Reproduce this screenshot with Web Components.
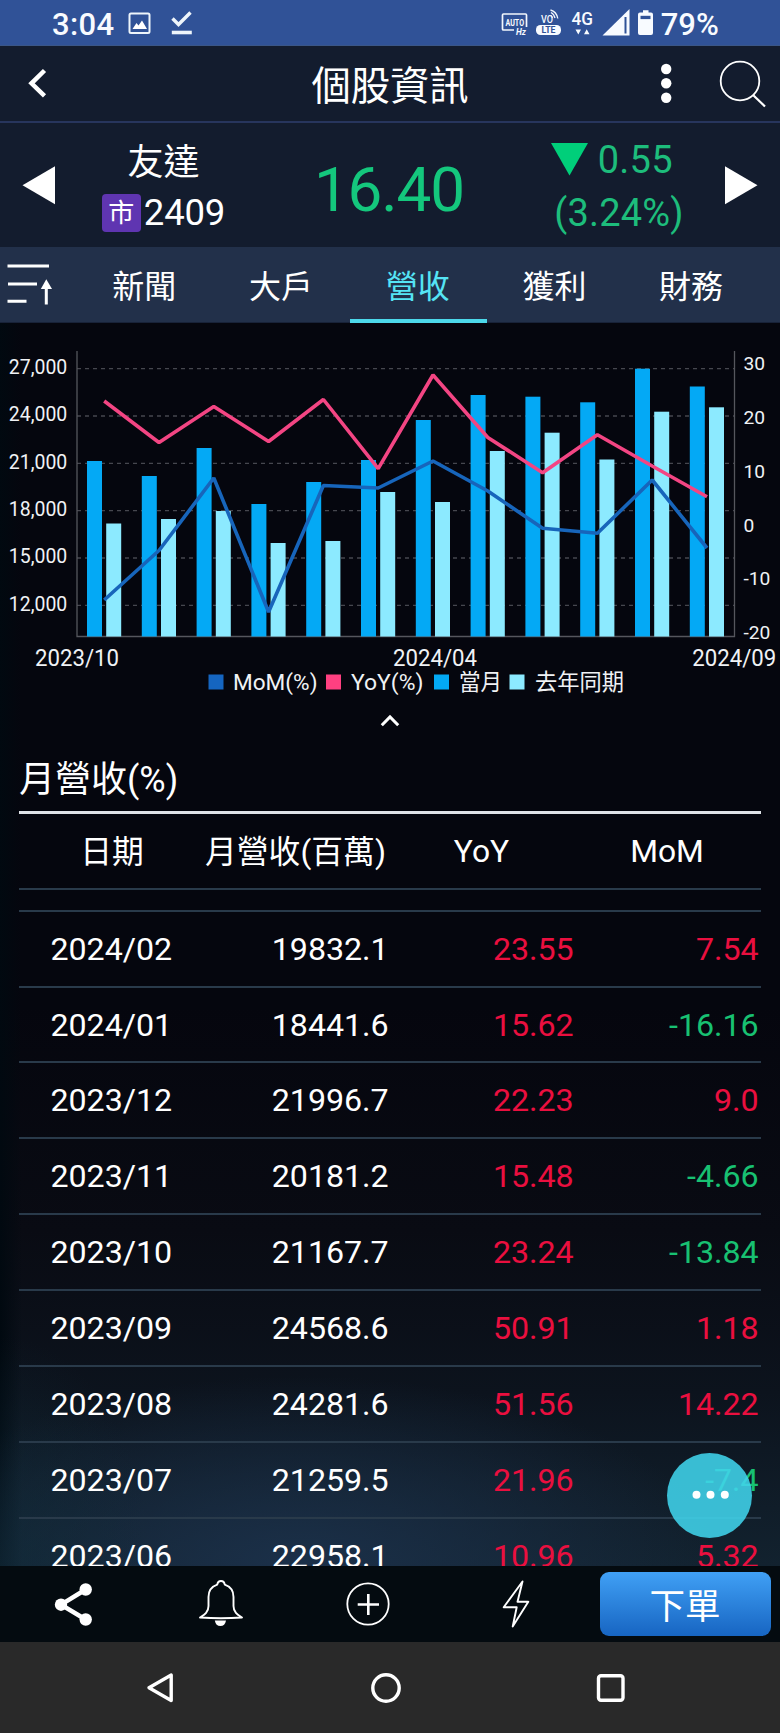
<!DOCTYPE html>
<html lang="zh-Hant">
<head>
<meta charset="utf-8">
<title>個股資訊</title>
<style>
html,body{margin:0;padding:0;background:#05060e}
body{font-family:Roboto,"Noto Sans CJK TC",sans-serif;color:#fff;width:780px;height:1733px;overflow:hidden}
</style>
</head>
<body>
<stock-app></stock-app>
<script>
function define(name, html, setup) {
  customElements.define(name, class extends HTMLElement {
    constructor() {
      super();
      const root = this.attachShadow({ mode: 'open' });
      root.innerHTML = '<style>*{box-sizing:border-box}svg{display:block}:host{display:block}</style>' + html;
    }
    connectedCallback() { if (setup) setup(this, this.shadowRoot); }
  });
}

define('status-bar', `
<style>
:host{display:flex;height:45.5px;background:#305297;font-weight:500;font-size:31px;line-height:49px;justify-content:space-between;padding:0 61px 0 52px;border-bottom:1px solid #3a5687;color:#f8fbff}
div{display:flex}
.n{letter-spacing:.1px}
.t{width:63px;letter-spacing:.4px}
svg{flex:none}
</style>
<div><span class="t">3:04</span>
<svg width="82" height="45" viewBox="115 0 82 45" fill="none" stroke="#eef5fb"><rect x="129.500" y="13.500" width="20" height="19.500" rx="1.500" stroke-width="2"/><path d="M132.500 29l4-6 2 2.500 3.500-5 5 8.500z" fill="#fff" stroke="none"/><path d="M172.500 18.500l6 6 12-12" stroke-width="3.400"/><path d="M171.800 32.500h20" stroke-width="3.600"/></svg></div>
<div><svg width="160" height="45" viewBox="501 0 160 45" fill="none" stroke="#f2f7fd">
<path d="M514 30h-10.500q-1 0-1-1V15q0-1 1-1h22q1 0 1 1v12" stroke-width="1.700"/>
<g fill="#f8fbff" stroke="none" font-family="Roboto" font-weight="700"><text x="505.500" y="25.500" font-size="9.500" textLength="18.500" lengthAdjust="spacingAndGlyphs">AUTO</text><text x="516" y="34.500" font-size="8.500" font-style="italic" textLength="10" lengthAdjust="spacingAndGlyphs">Hz</text>
<text x="541" y="22.500" font-size="11" font-weight="500" textLength="12" lengthAdjust="spacingAndGlyphs">VO</text>
<rect x="536" y="25" width="25" height="10" rx="4.500"/><text x="541.500" y="33.300" font-size="9.500" fill="#305297" textLength="14" lengthAdjust="spacingAndGlyphs">LTE</text>
<text x="571.500" y="25" font-size="17.800" font-weight="500" textLength="21.500" lengthAdjust="spacingAndGlyphs">4G</text>
<path d="M575.500 29.500h5.500l-2.700 5zM584 34.200l2.700-5 2.800 5z"/>
<path d="M602.500 35.500L629.500 9v26.500z"/><path d="M638 14.500q0-2 2-2h3v-2.300h5.500v2.300h2.500q2 0 2 2V33q0 2-2 2h-11q-2 0-2-2z"/></g>
<path d="M551 15.500q1 .8 1.500 2.500M551 12.500q3 1.500 4 5.500M550.500 10q6 1.500 7.300 8.500" stroke-width="1.300"/>
<path d="M625.500 17v16.500" stroke="#305297" stroke-width="2"/><path d="M640.500 15.800h10v3.300h-10z" fill="#305297" stroke="none"/>
</svg><span class="n">79%</span></div>`);

define('title-bar', `
<style>
:host{display:grid;grid-template-columns:311px 1fr 311px;height:77.500px;background:#131c2e;border-bottom:2.500px solid #27355d}
h1{margin:0;font-weight:400;font-size:39.300px;line-height:82px;text-align:center;white-space:nowrap}
</style>
<svg width="311" height="75" viewBox="0 46 311 75"><path d="M44.500 70.500L31.500 83.300l13 12.500" fill="none" stroke="#fff" stroke-width="4.500"/></svg>
<h1><slot></slot></h1>
<svg width="311" height="75" viewBox="469 46 311 75" fill="#fff"><circle cx="666.200" cy="69" r="5.200"/><circle cx="666.200" cy="83.300" r="5.200"/><circle cx="666.200" cy="97.700" r="5.200"/><g fill="none" stroke="#fff" stroke-width="1.800"><circle cx="740" cy="81" r="19.300"/><path d="M753 95l12 11.500" stroke-width="2.200"/></g></svg>`);

define('quote-bar', `
<style>
:host{display:grid;grid-template-columns:76px 175px 276px 170px 83px;height:124px;background:#131c2e;align-items:center}
.name{display:flex;flex-direction:column;align-items:center;font-size:36px;padding-top:5px}
.name div{height:50px;line-height:50px;display:flex;align-items:center;gap:3px}
.badge{width:39px;height:38px;border-radius:4px;background:#5f35b1;font-size:26px;line-height:39px;text-align:center}
.code{font-size:36.500px;letter-spacing:-.2px}
.price{font-size:62px;color:#14c77d;text-align:center;line-height:124px;letter-spacing:-1.100px;padding-top:5px;height:124px}
.chg{font-size:38px;color:#1dbd7c;line-height:53px;letter-spacing:.2px;padding-top:4px}
.chg div{display:flex;gap:9.500px;justify-content:center}
</style>
<svg width="76" height="124" viewBox="0 123 76 124"><path d="M22.500 185.300l32.500-19v38z" fill="#fff"/></svg>
<div class="name"><div>友達</div><div><span class="badge">市</span><span class="code">2409</span></div></div>
<div class="price">16.40</div>
<div class="chg"><div><svg width="37" height="53"><path d="M0 9h37L18.500 41.500z" fill="#00cf7a"/></svg><span>0.55</span></div><div style="padding-left:14px">(3.24%)</div></div>
<svg width="83" height="124" viewBox="697 123 83 124"><path d="M757.500 185.300l-32.500-19v38z" fill="#fff"/></svg>`);

define('tab-bar', `
<style>
:host{display:grid;grid-template-columns:76.500px repeat(5,136.700px);height:76px;background:#22304a;border-bottom:1.500px solid #182238}
span{font-size:32px;line-height:80px;text-align:center;height:75.500px;display:block;padding-right:1px}
.on{color:#55e4f5;border-bottom:4px solid #4cd8ea}
</style>
<svg width="76" height="75" viewBox="0 247 76 75"><path d="M7.500 266H49M8 284h29M7.500 301.300h19M46.300 304.500V287" stroke="#fff" stroke-width="3" fill="none"/><path d="M40.800 289l5.500-9.700 5.700 9.700z" fill="#fff"/></svg>
<span>新聞</span><span>大戶</span><span class="on">營收</span><span>獲利</span><span>財務</span>`);

define('revenue-chart', `
<style>
:host{height:375px}
svg{font-family:Roboto,"Noto Sans CJK TC",sans-serif}
</style><svg width="780" height="375" viewBox="0 323 780 375"></svg>`, (host, root) => {
  const cur = [461,476,448,504,482,460,420,395,396.7,402.3,368.7,386.5];
  const prev = [523.5,519,511,543,541,492,502,451,432.7,459.5,411.7,407.3];
  const yoy = [401,442.5,406.5,441.5,399.5,468.7,375,437.5,472.7,434.7,466,496.8];
  const mom = [600,550.5,478,612,485.5,488,461,491,528.3,533.3,480,548];
  const step = 54.8, base = 636.5;
  let s = '';
  [368.6,416,463.4,510.6,558,605.3].forEach((y, i) => {
    s += `<path d="M77 ${y}H734" stroke="#46474f" stroke-width="1.300" stroke-dasharray="4 4"/>`;
    s += `<text x="67.300" y="${y + 5.2}" text-anchor="end" font-size="19.300" textLength="58.500" lengthAdjust="spacingAndGlyphs">${(27 - i * 3)},000</text>`;
  });
  s += `<path d="M77 351V${base}H734.500V351" fill="none" stroke="#55565d" stroke-width="1.300"/>`;
  cur.forEach((y, i) => s += `<rect x="${87 + step * i}" y="${y}" width="15" height="${base - y}" fill="#04a9f5"/>`);
  prev.forEach((y, i) => s += `<rect x="${106.2 + step * i}" y="${y}" width="15" height="${base - y}" fill="#8ceaff"/>`);
  const line = (a, c) => `<polyline points="${a.map((y, i) => (104.2 + step * i) + ',' + y).join(' ')}" fill="none" stroke="${c}" stroke-width="3.600" stroke-linejoin="bevel"/>`;
  s += line(mom, '#1765bb') + line(yoy, '#f34583');
  [30,20,10,0,-10,-20].forEach((v, i) => s += `<text x="743.500" y="${369.8 + i * 53.9}" font-size="19.200">${v}</text>`);
  [['2023/10',35],['2024/04',393],['2024/09',692.300]].forEach(([t, x]) => s += `<text x="${x}" y="665.800" font-size="23" textLength="84" lengthAdjust="spacingAndGlyphs">${t}</text>`);
  [['MoM(%)',208.5,'#1565c0',233,84.5],['YoY(%)',326,'#ff4081',351,72.5],['當月',434,'#03a9f4',459,43],['去年同期',509.500,'#8ceaff',535,89]].forEach(([t, x, c, tx, w]) =>
    s += `<rect x="${x}" y="674.500" width="15" height="15" fill="${c}"/><text x="${tx}" y="689.500" font-size="22.500" textLength="${w}" lengthAdjust="spacingAndGlyphs">${t}</text>`);
  root.querySelector('svg').innerHTML = `<g fill="#f0f2f5">${s}</g>`;
});

define('collapse-handle', `
<style>:host{height:48px}</style>
<svg width="780" height="48" viewBox="0 698 780 48"><path d="M381.800 725.300l8.200-8.300 8.200 8.300" fill="none" stroke="#fff" stroke-width="3"/></svg>`);

define('table-row', `
<style>
:host{display:grid;grid-template-columns:153px 216.500px 185px 185px;height:75.850px;border-bottom:2px solid #293a4a;font-size:32.200px;line-height:75px;letter-spacing:-.05px;color:#fff}
span{text-align:right}
</style><span class="d"></span><span class="r"></span><span class="y"></span><span class="m"></span>`, (host, root) => {
  ['d','r','y','m'].forEach(k => {
    const v = host.getAttribute(k), el = root.querySelector('.' + k);
    el.textContent = v;
    if (k === 'y' || k === 'm') el.style.color = v[0] === '-' ? '#18c172' : '#ea0f3f';
  });
});

define('revenue-table', `
<style>
:host{padding:0 19px;height:820px;overflow:hidden}
h2{margin:0;height:68px;border-bottom:3px solid #dfe3e8;font-weight:400;font-size:36px;line-height:69px}
.head{display:grid;grid-template-columns:186px 181px 189px 1fr;font-size:31.800px;line-height:77px;height:75.500px;border-bottom:2px solid #293a4a;text-align:center;white-space:nowrap}
.head .en{line-height:75px}
.gap{height:22.300px;border-bottom:2px solid #293a4a}
</style>
<h2>月營收(%)</h2>
<div class="head"><span>日期</span><span>月營收(百萬)</span><span class="en" style="padding-left:2px">YoY</span><span class="en" style="padding-right:2px">MoM</span></div>
<div class="gap"></div><div class="rows"></div>`, (host, root) => {
  root.querySelector('.rows').innerHTML = `2024/02 19832.1 23.55 7.54
2024/01 18441.6 15.62 -16.16
2023/12 21996.7 22.23 9.0
2023/11 20181.2 15.48 -4.66
2023/10 21167.7 23.24 -13.84
2023/09 24568.6 50.91 1.18
2023/08 24281.6 51.56 14.22
2023/07 21259.5 21.96 -7.4
2023/06 22958.1 10.96 5.32`.split('\n').map(l => {
    const [d, r, y, m] = l.split(' ');
    return `<table-row d="${d}" r="${r}" y="${y}" m="${m}"></table-row>`;
  }).join('');
});

define('fab-more', `
<style>
:host{position:absolute;left:666.500px;top:1453px;width:85px;height:85px;border-radius:50%;background:rgba(64,212,236,.88)}
</style>
<svg width="85" height="85" fill="#fff"><circle cx="29.500" cy="41.800" r="4"/><circle cx="43.500" cy="41.800" r="4"/><circle cx="57.800" cy="41.800" r="4"/></svg>`);

define('action-bar', `
<style>
:host{display:flex;height:76px;background:#040b10;padding-right:9.500px;align-items:center}
button{all:unset;width:171px;height:64px;border-radius:9px;background:linear-gradient(#40a0f5,#1765c2);text-align:center;font-size:35.500px;line-height:70px;color:#fff}
svg{flex:1}
</style>
<svg height="76" viewBox="0 1566 599.500 76" fill="none" stroke="#fff">
<path d="M85.700 1589.500L61 1604.700l24.700 14.800" stroke-width="4.500"/><g fill="#fff" stroke="none"><circle cx="85.700" cy="1589.500" r="6.200"/><circle cx="61" cy="1604.700" r="6.200"/><circle cx="85.700" cy="1619.500" r="6.200"/></g>
<path d="M200 1617.500c3.500-2.300 8.500-4.700 8.500-11.500v-9c0-6.500 3.500-10.500 8.700-12.300.4-2.200 1.500-3.700 3.800-3.700s3.400 1.500 3.800 3.700c5.200 1.800 8.700 5.800 8.700 12.300v9c0 6.800 5 9.200 8.500 11.500q-21 1.600-42 0z" stroke-width="1.900" stroke-linejoin="round"/><path d="M214.800 1620.500h11.200q-1 5.500-5.600 5.500t-5.600-5.500z" fill="#fff" stroke="none"/>
<circle cx="368" cy="1604" r="20.700" stroke-width="1.800"/><path d="M357.700 1604.500H379M368.300 1594v21" stroke-width="2.600"/>
<path d="M522.800 1581.500l-19.300 25.700 14.200 1-4.200 18 15-24.700-12-1z" stroke-width="0"/><path d="M522.500 1581.500L503.700 1607.300H516.700L512.700 1626.500L528.300 1601.700H517.500z" stroke-width="1.900" stroke-linejoin="round"/>
</svg><button>下單</button>`);

define('nav-bar', `
<style>:host{height:91px;background:#292929}</style>
<svg width="780" height="91" viewBox="0 1642 780 91" fill="none" stroke="#fff" stroke-width="3.400" stroke-linejoin="round"><path d="M149 1687.700l22.200-12.700v25.500z"/><circle cx="386" cy="1688" r="13.200"/><rect x="598.500" y="1675.800" width="24.500" height="24.500" rx="2.500"/></svg>`);

define('stock-app', `
<style>
:host{position:relative;width:780px;height:1733px;overflow:hidden}
main{height:1243px;background:radial-gradient(ellipse 150px 230px at 0 100%,#112c3a90,#11303c00),radial-gradient(ellipse 420px 190px at 300px 100%,#1b3049,#1b304900),linear-gradient(90deg,#010910,#01091000 22px),linear-gradient(#05060e 0,#05060e 55%,#090b13 73%,#0c131d 86%,#12222f);overflow:hidden}
</style>
<status-bar></status-bar><title-bar>個股資訊</title-bar><quote-bar></quote-bar><tab-bar></tab-bar>
<main><revenue-chart></revenue-chart><collapse-handle></collapse-handle><revenue-table></revenue-table></main>
<action-bar></action-bar><nav-bar></nav-bar><fab-more></fab-more>`);
</script>
</body>
</html>
